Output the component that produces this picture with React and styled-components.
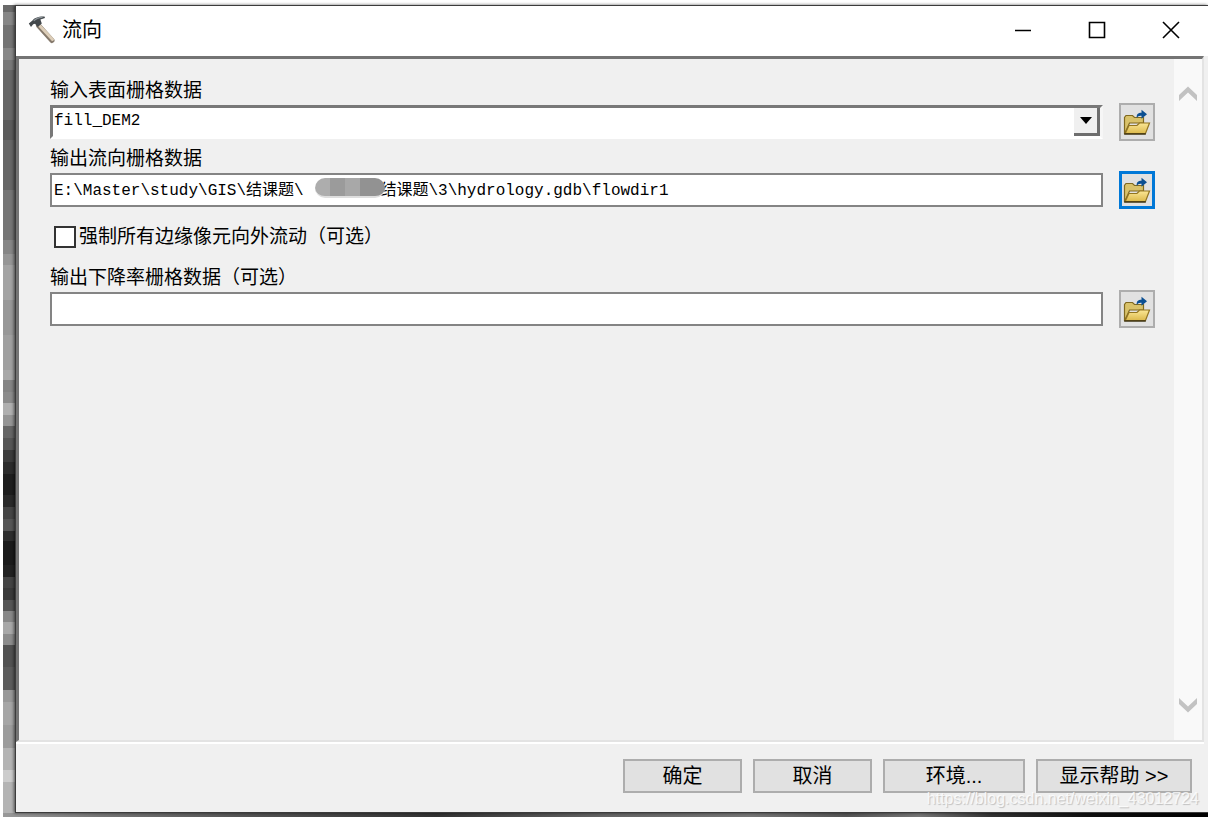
import React, { useState } from "react";
import styled, { createGlobalStyle, css } from "styled-components";

const ui = `"Liberation Sans", "Noto Sans CJK SC", sans-serif`;
const mono = `"Liberation Mono", "Noto Sans CJK SC", monospace`;

/* Grey raster blocks of the map behind the dialog: [end in px, colour] */
const blocks = [
  [7, "#6a6a6a"], [20, "#878787"], [43, "#747474"], [55, "#888888"], [65, "#787878"],
  [115, "#666666"], [135, "#5b5b5b"], [185, "#666666"], [235, "#757575"], [249, "#868686"],
  [260, "#969696"], [295, "#a4a4a4"], [330, "#989898"], [365, "#a0a0a0"], [375, "#a8a8a8"],
  [387, "#848484"], [398, "#8c8c8c"], [410, "#b0b0b0"], [421, "#959595"], [433, "#666666"],
  [445, "#565656"], [457, "#3c3c3c"], [469, "#2c2c2c"], [490, "#1e1e1e"], [502, "#2a2a2a"],
  [514, "#454545"], [526, "#555555"], [536, "#2e2e2e"], [560, "#1b1b1b"], [572, "#222222"],
  [583, "#444444"], [595, "#3a3a3a"], [606, "#555555"], [617, "#888888"], [629, "#a8a8a8"],
  [640, "#8c8c8c"], [662, "#525252"], [685, "#5c5c5c"], [697, "#989898"], [720, "#a6a6a6"],
  [743, "#9c9c9c"], [765, "#b4b4b4"], [777, "#cccccc"], [812, "#b4b4b4"],
];
const terrain = blocks
  .map(([end, colour], i) => `${colour} ${i ? blocks[i - 1][0] : 0}px ${end}px`)
  .join(", ");

const Global = createGlobalStyle`
  *, *::before, *::after { box-sizing: border-box; }
  body { margin: 0; background: #fff; color: #000; font: 20px/24px ${ui}; }
  button, input, select { font: inherit; color: inherit; margin: 0; border-radius: 0; }
`;

const Desktop = styled.div`
  min-height: 100vh;
  display: flex;
  padding: 5px 0 0 3px;
`;

const MapBackdrop = styled.div`
  flex: 1;
  display: flex;
  padding: 0 0 4px 12px;
  background:
    linear-gradient(90deg, #999 0, #777 8%, #555 20%, #333 36%, #666 50%, #777 62%, #555 70%, #777 76%, #333 82%, #111 90%, #000) 0 100% / 100% 4px no-repeat,
    linear-gradient(${terrain});
`;

const Dialog = styled.main`
  position: relative;
  flex: 1;
  min-width: 0;
  display: flex;
  flex-direction: column;
  background: #f0f0f0;
  border: solid #3c3c3c;
  border-width: 1px 0 1px 1px;
  box-shadow: -1px 0 3px rgba(0, 0, 0, 0.6);
`;

const TitleBar = styled.header`
  display: flex;
  align-items: center;
  height: 50px;
  padding: 0 0 2px 12px;
  background: #fff;
`;

const Title = styled.h1`
  flex: 1;
  margin: 0 0 0 6px;
  font-size: 20px;
  font-weight: 400;
  line-height: 24px;
`;

const CaptionButton = styled.button`
  display: grid;
  place-items: center;
  width: 74px;
  height: 48px;
  padding: 0;
  border: 0;
  background: transparent;
`;

const Panel = styled.section`
  flex: 1;
  display: flex;
  margin-right: 4px;
  border-style: solid;
  border-width: 3px 2px 2px 3px;
  border-color: #747474 #e3e3e3 #e3e3e3 #747474;
  box-shadow: 0 2px 0 #fff;
`;

const Form = styled.form`
  flex: 1;
  min-width: 0;
  padding: 19px 19px 0 31px;
`;

const Field = styled.div`
  display: grid;
  margin-bottom: 5px;
`;

const Label = styled.label`
  padding-top: 1px;
  font-size: 19px;
  line-height: 24px;
`;

const FieldRow = styled.div`
  display: flex;
  align-items: center;
  gap: 16px;
  height: 38px;
`;

const Control = styled.div`
  position: relative;
  flex: 1;
  min-width: 0;
  display: flex;
`;

const entry = css`
  width: 100%;
  height: 34px;
  font-family: ${mono};
  font-size: 16px;
  line-height: 24px;
  background: #fff;
  outline: 0;
`;

const TextBox = styled.input`
  ${entry}
  padding: 0 2px 4px;
  border: 2px solid #848484;
`;

const Combo = styled.select`
  ${entry}
  appearance: none;
  padding: 0 30px 3px 1px;
  border: solid;
  border-width: 3px;
  border-color: #787878 #f6f6f6 #fff #787878;
`;

const ComboArrow = styled.span`
  position: absolute;
  top: 3px;
  right: 3px;
  display: grid;
  place-items: center;
  width: 26px;
  height: 28px;
  background: #f0f0f0;
  border: solid #6e6e6e;
  border-width: 0 3px 3px 0;
  pointer-events: none;
`;

const Redaction = styled.span`
  position: absolute;
  top: 5px;
  left: 265px;
  width: 70px;
  height: 20px;
  border-radius: 10px;
  background: linear-gradient(90deg, #adadad 0 15px, #9b9b9b 15px 30px, #a8a8a8 30px 45px, #929292 45px);
  border-bottom: 2px solid #dedede;
`;

const BrowseButton = styled.button`
  display: grid;
  place-items: center;
  width: 36px;
  height: 38px;
  padding: 0;
  background: #e1e1e1;
  border: ${(p) => (p.$focused ? "3px solid #0078d7" : "2px solid #adadad")};
`;

const CheckRow = styled.div`
  display: flex;
  align-items: center;
  gap: 3px;
  margin: 15px 0 16px;
  padding-left: 4px;
`;

const CheckBox = styled.input`
  appearance: none;
  width: 22px;
  height: 22px;
  background: #fff;
  border: 2px solid #333;
  &:checked { background: #333; box-shadow: inset 0 0 0 3px #fff; }
`;

const ScrollTrack = styled.div`
  display: flex;
  flex-direction: column;
  justify-content: space-between;
  width: 28px;
  padding: 24px 0;
  background: #f9f9f9;
`;

const ScrollButton = styled.button`
  display: grid;
  place-items: center;
  height: 22px;
  padding: 0;
  border: 0;
  background: transparent;
`;

const Footer = styled.footer`
  display: flex;
  justify-content: flex-end;
  gap: 11px;
  padding: 17px 16px 19px 0;
`;

const ActionButton = styled.button`
  width: ${(p) => p.$width}px;
  height: 34px;
  padding: 0;
  line-height: 24px;
  background: #e1e1e1;
  border: 2px solid #adadad;
`;

const Watermark = styled.div`
  position: absolute;
  right: 9px;
  bottom: 1px;
  font-size: 16px;
  color: rgba(255, 255, 255, 0.8);
  text-shadow: 1px 1px 1px rgba(0, 0, 0, 0.2);
  pointer-events: none;
`;

function HammerIcon() {
  return (
    <svg width="28" height="28" viewBox="0 0 28 28" aria-hidden="true">
      <path d="M10.5 9.5 24 24.5" stroke="#85796c" strokeWidth="5" strokeLinecap="round" />
      <path d="M11.5 9.5 24.5 23.5" stroke="#dccdb8" strokeWidth="3" strokeLinecap="round" />
      <path d="M0.8 7.5 4.2 4.8C6 1.8 10 0.2 16.5 0.4L17 2 12.4 3.6 13.8 7.6 9.8 11 7 7.8 5.2 8.2 3 11Z" fill="#43484c" />
      <path d="M5.8 4.8C8 2.4 11 1.6 14.5 1.4" stroke="#8d9499" strokeWidth="1.2" fill="none" />
    </svg>
  );
}

function FolderIcon() {
  return (
    <svg width="28" height="28" viewBox="0 0 28 28" aria-hidden="true">
      <defs>
        <linearGradient id="folderFront" x1="0" y1="0" x2="0" y2="1">
          <stop offset="0" stopColor="#fbe795" />
          <stop offset="1" stopColor="#dcb94c" />
        </linearGradient>
      </defs>
      <path d="M1.5 26V9.5L3 7.5H9.5L11.5 9.5H20.5V15H6.5Z" fill="#d9c26a" stroke="#80691f" strokeWidth="1.2" />
      <path d="M6 17.5H14L16.5 15H26.5L22.5 25.5H2.2Z" fill="url(#folderFront)" stroke="#927420" strokeWidth="1.2" />
      <path d="M1.2 26H22.8" stroke="#3d3210" strokeWidth="1.5" />
      <path d="M13.8 10C13.2 6.6 15 4.8 18.5 4.8V1.8L24 6.3 18.5 10.8V7.8C16 7.5 15 8.2 13.8 10Z" fill="#0b4f92" />
    </svg>
  );
}

function Chevron({ down }) {
  return (
    <svg width="20" height="16" viewBox="0 0 20 16" aria-hidden="true">
      <path d={down ? "M1 1V7L10 15.5 19 7V1L10 9.5Z" : "M1 15V9L10 0.5 19 9V15L10 6.5Z"} fill="#c2c2c2" />
    </svg>
  );
}

function Browse({ focused, label }) {
  return (
    <BrowseButton type="button" $focused={focused} aria-label={label}>
      <FolderIcon />
    </BrowseButton>
  );
}

export default function App() {
  const [path, setPath] = useState(
    "E:\\Master\\study\\GIS\\结课题\\" + "\u00a0".repeat(8) + "结课题\\3\\hydrology.gdb\\flowdir1"
  );
  return (
    <>
      <Global />
      <Desktop>
        <MapBackdrop>
          <Dialog>
            <TitleBar>
              <HammerIcon />
              <Title>流向</Title>
              <CaptionButton type="button" aria-label="最小化">
                <svg width="18" height="18"><path d="M1 9.5H17" stroke="#000" strokeWidth="1.5" /></svg>
              </CaptionButton>
              <CaptionButton type="button" aria-label="最大化">
                <svg width="18" height="18"><path d="M1.5 1.5H16.5V16.5H1.5Z" fill="none" stroke="#000" strokeWidth="1.6" /></svg>
              </CaptionButton>
              <CaptionButton type="button" aria-label="关闭">
                <svg width="18" height="18"><path d="M1 1 17 17M17 1 1 17" stroke="#000" strokeWidth="1.6" /></svg>
              </CaptionButton>
            </TitleBar>
            <Panel>
              <Form>
                <Field>
                  <Label htmlFor="surface">输入表面栅格数据</Label>
                  <FieldRow>
                    <Control>
                      <Combo id="surface">
                        <option>fill_DEM2</option>
                      </Combo>
                      <ComboArrow>
                        <svg width="12" height="7"><path d="M0 0H12L6 7Z" /></svg>
                      </ComboArrow>
                    </Control>
                    <Browse label="浏览输入" />
                  </FieldRow>
                </Field>
                <Field>
                  <Label htmlFor="direction">输出流向栅格数据</Label>
                  <FieldRow>
                    <Control>
                      <TextBox id="direction" value={path} onChange={(e) => setPath(e.target.value)} />
                      <Redaction />
                    </Control>
                    <Browse label="浏览输出" focused />
                  </FieldRow>
                </Field>
                <CheckRow>
                  <CheckBox type="checkbox" id="edges" />
                  <Label htmlFor="edges">强制所有边缘像元向外流动（可选）</Label>
                </CheckRow>
                <Field>
                  <Label htmlFor="drop">输出下降率栅格数据（可选）</Label>
                  <FieldRow>
                    <Control>
                      <TextBox id="drop" />
                    </Control>
                    <Browse label="浏览下降率" />
                  </FieldRow>
                </Field>
              </Form>
              <ScrollTrack>
                <ScrollButton type="button" aria-label="向上滚动"><Chevron /></ScrollButton>
                <ScrollButton type="button" aria-label="向下滚动"><Chevron down /></ScrollButton>
              </ScrollTrack>
            </Panel>
            <Footer>
              <ActionButton type="button" $width={119}>确定</ActionButton>
              <ActionButton type="button" $width={119}>取消</ActionButton>
              <ActionButton type="button" $width={142}>环境...</ActionButton>
              <ActionButton type="button" $width={156}>显示帮助 &gt;&gt;</ActionButton>
            </Footer>
            <Watermark>https://blog.csdn.net/weixin_43012724</Watermark>
          </Dialog>
        </MapBackdrop>
      </Desktop>
    </>
  );
}
